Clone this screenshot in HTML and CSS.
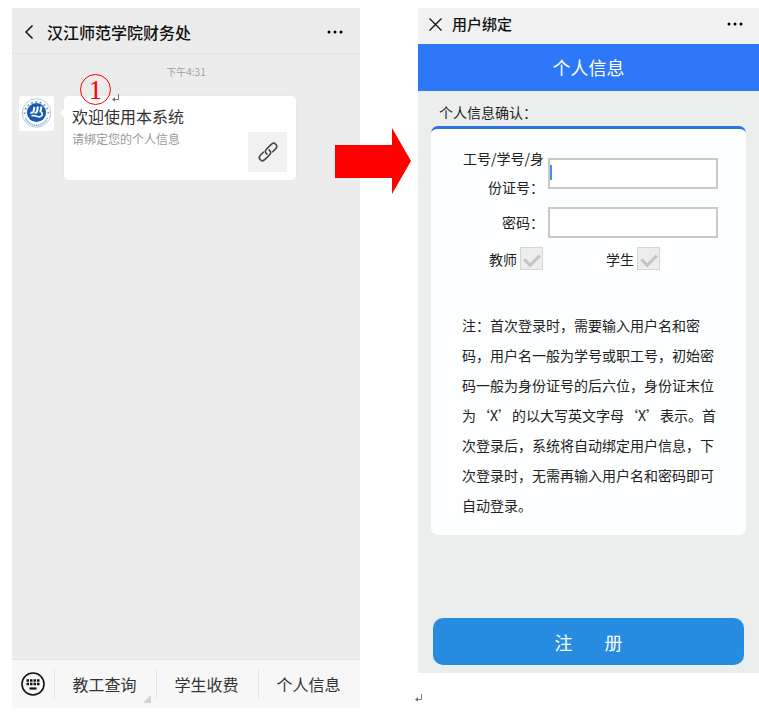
FILE: index.html
```html
<!DOCTYPE html>
<html lang="zh-CN">
<head>
  <meta charset="UTF-8">
  <meta name="viewport" content="width=device-width, initial-scale=1.0">
  <title>用户绑定</title>
  <link rel="stylesheet" href="styles.css">
</head>
<body>
  <main class="steps">
    <section class="phone chat">
      <header class="chat-header">
        <button class="icon-button" type="button" aria-label="返回">
          <svg width="10" height="16" viewBox="0 0 10 16"><path d="M8.500 1.500 2 8l6.500 6.500" fill="none" stroke="#111" stroke-width="1.500"/></svg>
        </button>
        <h1 class="chat-title">汉江师范学院财务处</h1>
        <button class="icon-button more" type="button" aria-label="更多">
          <svg width="16" height="4" viewBox="0 0 16 4"><circle cx="2" cy="2" r="1.500"/><circle cx="8" cy="2" r="1.500"/><circle cx="14" cy="2" r="1.500"/></svg>
        </button>
      </header>

      <div class="chat-body">
        <time class="chat-time">下午4:31</time>
        <div class="message">
          <svg class="avatar" width="35" height="35" viewBox="0 0 35 35">
            <rect width="35" height="35" rx="3" fill="#fff"/>
            <circle cx="17.500" cy="17" r="14.300" fill="#fff" stroke="#9dbddc" stroke-width=".8"/>
            <path d="M5.500 18a12 12 0 0 1 24 0" fill="none" stroke="#7599bf" stroke-width="1.800" stroke-dasharray="1.800 2.600"/>
            <path d="M6.500 22a11.900 11.900 0 0 0 22 0" fill="none" stroke="#7d9fc4" stroke-width="1.300" stroke-dasharray="1.300 .6"/>
            <circle cx="17.500" cy="16.500" r="9.600" fill="#155bb0"/>
            <path d="M15.500 11 14.500 15.500q-.5 1.500-3 1.200M19 10.500l-1 5q-.5 1.500-2.500 1.200M22.500 10.500l-1.200 6" fill="none" stroke="#fff" stroke-width="2"/>
            <path d="M12.500 20c2.500-2 5.500 2 9 .6 2.500-1 2.300-3.600.5-4.300" fill="none" stroke="#fff" stroke-width="1.600"/>
          </svg>
          <article class="bubble">
            <h2 class="bubble-title">欢迎使用本系统</h2>
            <p class="bubble-text">请绑定您的个人信息</p>
            <a class="bubble-link" href="#bind" aria-label="绑定">
              <svg width="20" height="20" viewBox="1 1 18 18" fill="none" stroke="#484848" stroke-width="1.500" stroke-linecap="round">
                <path d="M9 11.800C7.200 10.400 7.200 8.800 8.500 7.500l4.200-4.200c3-3 7 .9 4 4l-2.500 2.500"/>
                <path d="M11 8.200c1.800 1.400 1.800 3 .5 4.300l-4.200 4.200c-3 3-7-.9-4-4l2.500-2.500"/>
              </svg>
            </a>
            <span class="step-number">1</span>
            <svg class="return-mark bubble-mark" width="7" height="8" viewBox="0 0 7 8"><path d="M6.500 0v5.500H2"/><path class="head" d="M0 5.500 3 3v5z"/></svg>
          </article>
        </div>
      </div>

      <nav class="chat-menu">
        <button class="keyboard" type="button" aria-label="键盘">
          <svg width="24" height="24" viewBox="0 0 24 24">
            <circle cx="12" cy="12" r="11" fill="none" stroke="#111" stroke-width="1.600"/>
            <path d="M5.500 8.500h13M5.500 12h13" fill="none" stroke="#111" stroke-width="2.300" stroke-dasharray="2.500 1"/>
            <path d="M8.500 16.500h7" stroke="#111" stroke-width="2.200"/>
          </svg>
        </button>
        <button class="menu-item has-more" type="button">教工查询</button>
        <button class="menu-item" type="button">学生收费</button>
        <button class="menu-item" type="button">个人信息</button>
      </nav>

      <svg class="arrow" width="77" height="66" viewBox="0 0 77 66"><path d="M0 17h57V0l19 33-19 33V50H0z" fill="#f00"/></svg>
    </section>

    <div class="step">
      <section class="phone bind" id="bind">
        <header class="bind-header">
          <button class="icon-button" type="button" aria-label="关闭">
            <svg width="13" height="13" viewBox="0 0 13 13"><path d="m.5.500 12 12M12.500.5l-12 12" stroke="#111" stroke-width="1.300"/></svg>
          </button>
          <h1 class="bind-title">用户绑定</h1>
          <button class="icon-button more" type="button" aria-label="更多">
            <svg width="16" height="4" viewBox="0 0 16 4"><circle cx="2" cy="2" r="1.500"/><circle cx="8" cy="2" r="1.500"/><circle cx="14" cy="2" r="1.500"/></svg>
          </button>
        </header>
        <h2 class="banner">个人信息</h2>

        <form class="bind-form">
          <p class="caption">个人信息确认：</p>
          <div class="card">
            <div class="field">
              <label for="account">工号/学号/身份证号：</label>
              <div class="input-wrap focused"><input id="account" type="text"></div>
            </div>
            <div class="field">
              <label for="password">密码：</label>
              <div class="input-wrap"><input id="password" type="password"></div>
            </div>
            <div class="roles">
              <label class="role" for="teacher">教师<input id="teacher" type="checkbox" checked></label>
              <label class="role" for="student">学生<input id="student" type="checkbox" checked></label>
            </div>
            <p class="note">注：首次登录时，需要输入用户名和密码，用户名一般为学号或职工号，初始密码一般为身份证号的后六位，身份证末位为‘X’的以大写英文字母‘X’表示。首次登录后，系统将自动绑定用户信息，下次登录时，无需再输入用户名和密码即可自动登录。</p>
          </div>
          <button class="submit" type="submit"><span>注</span><span>册</span></button>
        </form>
      </section>
      <svg class="return-mark" width="7" height="8" viewBox="0 0 7 8"><path d="M6.500 0v5.500H2"/><path class="head" d="M0 5.500 3 3v5z"/></svg>
    </div>
  </main>
</body>
</html>
```
FILE: styles.css
```css
* {
  box-sizing: border-box;
}

body {
  margin: 0;
  background: #fff;
  color: #222;
  font-family: "Noto Sans CJK SC", sans-serif;
  font-size: 14px;
}

h1, h2, p {
  margin: 0;
  font-weight: 400;
}

button {
  padding: 0;
  border: 0;
  background: none;
  color: inherit;
  font: inherit;
  cursor: pointer;
}

svg {
  display: block;
}

.steps {
  display: flex;
  align-items: flex-start;
  gap: 58px;
  padding: 8px 0 0 12px;
}

.icon-button {
  display: flex;
}

.more {
  margin-left: auto;
}

/* chat window */
.chat {
  position: relative;
  display: flex;
  flex: 348 1 0;
  flex-direction: column;
  min-height: calc(100vh - 14px);
  background: #ececec;
}

.chat-header {
  display: flex;
  align-items: center;
  gap: 13px;
  height: 46px;
  padding: 2px 17px 0 12px;
  border-bottom: 1px solid #e2e2e2;
}

.chat-title {
  color: #111;
  font-size: 16px;
  font-weight: 500;
  line-height: 24px;
}

.chat-body {
  flex: 1;
  padding: 10px 64px 0 7px;
}

.chat-time {
  display: block;
  margin-right: -57px;
  color: #a2a2a2;
  font-size: 10px;
  line-height: 16px;
  text-align: center;
}

.message {
  display: flex;
  align-items: flex-start;
  gap: 10px;
  margin-top: 16px;
}

.avatar {
  flex: none;
}

.bubble {
  position: relative;
  display: grid;
  flex: 1;
  grid-template-columns: 1fr auto;
  min-height: 84px;
  padding: 8px 9px 8px 8px;
  border-radius: 4px;
  background: #fff;
  box-shadow: 0 0 1px #ccc;
}

.bubble::before {
  content: "";
  position: absolute;
  top: 13px;
  left: -4px;
  border: 4px solid transparent;
  border-left: 0;
  border-right-color: #fff;
}

.bubble-title {
  grid-column: 1 / 3;
  color: #333;
  font-size: 16px;
  line-height: 24px;
}

.bubble-text {
  color: #999;
  font-size: 12px;
  line-height: 22px;
}

.bubble-link {
  display: flex;
  align-items: center;
  justify-content: center;
  width: 39px;
  height: 40px;
  margin-top: 4px;
  background: #f1f1f1;
}

.step-number {
  position: absolute;
  top: -22px;
  left: 16px;
  width: 31px;
  height: 31px;
  border: 1px solid #f00;
  border-radius: 50%;
  color: #f00;
  font-family: "Liberation Serif", serif;
  font-size: 27px;
  line-height: 30px;
  text-align: center;
}

.return-mark {
  fill: none;
  stroke: #777;
}

.return-mark .head {
  fill: #777;
  stroke: none;
}

.bubble-mark {
  position: absolute;
  top: -2px;
  left: 48px;
}

.chat-menu {
  display: flex;
  align-items: center;
  height: 49px;
  border-top: 1px solid #e0e0e0;
  background: #f7f7f7;
}

.keyboard {
  display: flex;
  justify-content: center;
  width: 42px;
}

.menu-item {
  position: relative;
  flex: 1;
  height: 28px;
  padding-right: 2px;
  border-left: 1px solid #e4e4e4;
  color: #333;
  font-size: 16px;
  line-height: 28px;
}

.has-more::after {
  content: "";
  position: absolute;
  right: 5px;
  bottom: -5px;
  border: 4px solid #d2d2d2;
  border-top-color: transparent;
  border-left-color: transparent;
}

.arrow {
  position: absolute;
  top: 120px;
  right: -52px;
}

/* binding page */
.step {
  flex: 341 1 0;
}

.step > .return-mark {
  margin: 21px 0 0 -3px;
}

.bind {
  background: #eceeed;
}

.bind-header {
  display: flex;
  align-items: center;
  gap: 10px;
  height: 36px;
  padding: 0 16px 4px 11px;
  background: #f1f1f1;
}

.bind-title {
  color: #111;
  font-size: 15px;
  font-weight: 500;
  line-height: 24px;
}

.banner {
  background: #2d78f8;
  color: #fff;
  font-size: 18px;
  line-height: 47px;
  text-align: center;
}

.bind-form {
  padding: 11px 13px 8px;
}

.caption {
  padding: 0 8px 4px;
  line-height: 20px;
}

.card {
  padding: 15px 24px 15px 0;
  border-top: 3px solid #2b73e6;
  border-radius: 7px;
  background: #fdfefe;
}

.field {
  display: grid;
  grid-template-columns: 113px 1fr;
  align-items: center;
  gap: 4px;
  padding-right: 4px;
}

.field label {
  padding-left: 28px;
  line-height: 29px;
  text-align: right;
}

.field + .field {
  margin-top: 5px;
}

.input-wrap {
  position: relative;
  display: flex;
}

.input-wrap input {
  width: 100%;
  height: 31px;
  padding: 0 4px;
  border: 2px solid #c9c9c9;
  border-radius: 0;
  background: #fff;
  font: inherit;
}

/* text cursor */
.focused::before {
  content: "";
  position: absolute;
  top: 7px;
  left: 2px;
  width: 2px;
  height: 15px;
  background: #4a8df0;
}

.roles {
  display: flex;
  gap: 63px;
  padding: 9px 0 0 58px;
}

.role {
  display: flex;
  align-items: center;
  gap: 3px;
}

.role input {
  display: flex;
  justify-content: center;
  width: 23px;
  height: 23px;
  margin: 0;
  border: 1px solid #d6d6d6;
  appearance: none;
  background: #ededed;
}

.role input:checked::after {
  content: "";
  width: 7px;
  height: 12px;
  margin-top: 3px;
  border: solid #c4c4c4;
  border-width: 0 3px 3px 0;
  transform: rotate(45deg);
}

.note {
  padding: 40px 0 0 31px;
  line-height: 30px;
}

.submit {
  display: flex;
  align-items: center;
  justify-content: center;
  gap: 32px;
  width: calc(100% - 4px);
  height: 47px;
  margin: 83px 2px 0;
  border-radius: 10px;
  background: #278be0;
  color: #fff;
  font-size: 18px;
}
```
